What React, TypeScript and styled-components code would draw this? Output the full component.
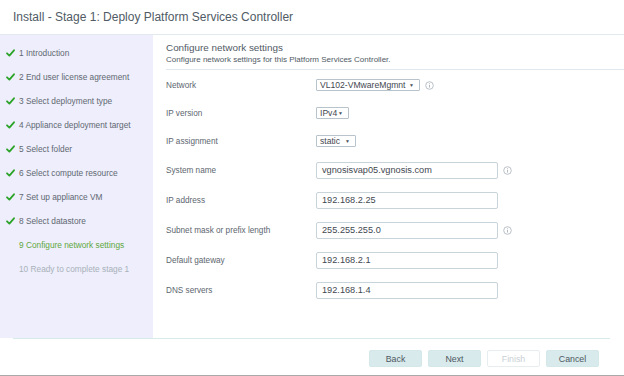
import React from 'react';
import styled, { createGlobalStyle } from 'styled-components';

const GlobalStyle = createGlobalStyle`
  html, body {
    margin: 0;
    padding: 0;
    background: #fff;
  }
  * {
    box-sizing: border-box;
  }
`;

const Window = styled.div`
  width: 624px;
  height: 376px;
  display: flex;
  flex-direction: column;
  font-family: 'Liberation Sans', Arial, sans-serif;
  color: #565f68;
  border-bottom: 1px solid #a9a9a9;
  overflow: hidden;
`;

const Header = styled.div`
  height: 35px;
  flex-shrink: 0;
  padding: 0 13px;
  display: flex;
  align-items: center;
  border-bottom: 1px solid #e2e9ef;
`;

const Title = styled.h1`
  margin: 0 0 1px;
  font-size: 12px;
  font-weight: normal;
  color: #505b65;
`;

const Body = styled.div`
  flex: 1;
  display: flex;
  min-height: 0;
`;

const Sidebar = styled.nav`
  width: 153px;
  flex-shrink: 0;
  background: #eeeefc;
  padding-top: 6px;
  display: flex;
  flex-direction: column;
`;

const Step = styled.div<{ $state: 'done' | 'active' | 'todo' }>`
  height: 24px;
  display: flex;
  align-items: center;
  padding-left: 6px;
  gap: 4px;
  font-size: 8.3px;
  color: ${p => (p.$state === 'active' ? '#5ea83c' : p.$state === 'todo' ? '#a9b1b9' : '#5f6871')};
`;

const CheckSlot = styled.span`
  width: 9px;
  height: 9px;
  display: inline-flex;
  align-items: center;
  justify-content: center;
`;

const Content = styled.main`
  flex: 1;
  padding: 7px 0 0 13px;
  display: flex;
  flex-direction: column;
`;

const Intro = styled.div`
  border-bottom: 1px solid #dfe8ee;
  padding-bottom: 4px;
`;

const Heading = styled.h2`
  margin: 0;
  font-size: 9.9px;
  font-weight: normal;
  color: #4f5a64;
  line-height: 12px;
`;

const Sub = styled.p`
  margin: 0;
  font-size: 8px;
  color: #4f5a64;
  line-height: 11px;
`;

const Form = styled.div`
  padding-top: 1px;
  display: grid;
  grid-template-columns: 150px auto;
`;

const Row = styled.div<{ $h: number }>`
  display: contents;
  & > * {
    height: ${p => p.$h}px;
  }
`;

const Label = styled.div`
  display: flex;
  align-items: center;
  font-size: 8.2px;
  color: #5d666f;
`;

const Field = styled.div`
  display: flex;
  align-items: center;
  gap: 5px;
`;

const Select = styled.div<{ $w: number }>`
  width: ${p => p.$w}px;
  height: 12px;
  border: 1px solid #b9c3cb;
  border-radius: 1px;
  display: flex;
  align-items: center;
  justify-content: space-between;
  padding: 0 5px 0 3px;
  font-size: 8.6px;
  color: #3f4850;
  background: #fff;
`;

const Arrow = styled.span`
  font-size: 5px;
  color: #4a535b;
`;

const Input = styled.div`
  width: 182px;
  height: 17px;
  border: 1px solid #c9d3da;
  border-radius: 2px;
  display: flex;
  align-items: center;
  padding-left: 5px;
  font-size: 9.2px;
  color: #3f4850;
`;

const Footer = styled.div`
  height: 37px;
  flex-shrink: 0;
  margin: 0 14px 0 13px;
  border-top: 1px solid #d7ebeb;
  display: flex;
  justify-content: flex-end;
  align-items: center;
  gap: 6px;
  padding-right: 11px;
  padding-top: 3px;
`;

const Button = styled.button<{ $disabled?: boolean }>`
  width: 53px;
  height: 17px;
  border: 1px solid ${p => (p.$disabled ? '#e8eef0' : '#d4e8ea')};
  border-radius: 2px;
  background: ${p => (p.$disabled ? '#ffffff' : '#d8eaec')};
  color: ${p => (p.$disabled ? '#c9d0d5' : '#4d5760')};
  font-family: 'Liberation Sans', Arial, sans-serif;
  font-size: 8.8px;
  padding: 0;
  cursor: pointer;
`;

const Check = () => (
  <svg width="9" height="8" viewBox="0 0 9 8">
    <path d="M1 4.3 L3.4 6.6 L8 1.3" fill="none" stroke="#2ea52a" strokeWidth="1.8" strokeLinecap="round" strokeLinejoin="round" />
  </svg>
);

const Info = () => (
  <svg width="9" height="9" viewBox="0 0 9 9">
    <circle cx="4.5" cy="4.5" r="3.8" fill="none" stroke="#aab2ba" strokeWidth="0.8" />
    <circle cx="4.5" cy="2.7" r="0.55" fill="#aab2ba" />
    <path d="M4.5 4 V6.6" stroke="#aab2ba" strokeWidth="0.9" />
  </svg>
);

const steps: { label: string; state: 'done' | 'active' | 'todo' }[] = [
  { label: '1 Introduction', state: 'done' },
  { label: '2 End user license agreement', state: 'done' },
  { label: '3 Select deployment type', state: 'done' },
  { label: '4 Appliance deployment target', state: 'done' },
  { label: '5 Select folder', state: 'done' },
  { label: '6 Select compute resource', state: 'done' },
  { label: '7 Set up appliance VM', state: 'done' },
  { label: '8 Select datastore', state: 'done' },
  { label: '9 Configure network settings', state: 'active' },
  { label: '10 Ready to complete stage 1', state: 'todo' },
];

const textFields = [
  { label: 'System name', value: 'vgnosisvap05.vgnosis.com', info: true },
  { label: 'IP address', value: '192.168.2.25' },
  { label: 'Subnet mask or prefix length', value: '255.255.255.0', info: true },
  { label: 'Default gateway', value: '192.168.2.1' },
  { label: 'DNS servers', value: '192.168.1.4' },
];

export default function App() {
  return (
    <>
      <GlobalStyle />
      <Window>
        <Header>
          <Title>Install - Stage 1: Deploy Platform Services Controller</Title>
        </Header>
        <Body>
          <Sidebar>
            {steps.map(s => (
              <Step key={s.label} $state={s.state}>
                <CheckSlot>{s.state === 'done' && <Check />}</CheckSlot>
                {s.label}
              </Step>
            ))}
          </Sidebar>
          <Content>
            <Intro>
              <Heading>Configure network settings</Heading>
              <Sub>Configure network settings for this Platform Services Controller.</Sub>
            </Intro>
            <Form>
              <Row $h={28}>
                <Label>Network</Label>
                <Field>
                  <Select $w={104}>VL102-VMwareMgmnt<Arrow>▼</Arrow></Select>
                  <Info />
                </Field>
              </Row>
              <Row $h={28}>
                <Label>IP version</Label>
                <Field>
                  <Select $w={33}>IPv4<Arrow>▼</Arrow></Select>
                </Field>
              </Row>
              <Row $h={28}>
                <Label>IP assignment</Label>
                <Field>
                  <Select $w={40}>static<Arrow>▼</Arrow></Select>
                </Field>
              </Row>
              {textFields.map(f => (
                <Row key={f.label} $h={30}>
                  <Label>{f.label}</Label>
                  <Field>
                    <Input>{f.value}</Input>
                    {f.info && <Info />}
                  </Field>
                </Row>
              ))}
            </Form>
          </Content>
        </Body>
        <Footer>
          <Button>Back</Button>
          <Button>Next</Button>
          <Button $disabled>Finish</Button>
          <Button>Cancel</Button>
        </Footer>
      </Window>
    </>
  );
}
